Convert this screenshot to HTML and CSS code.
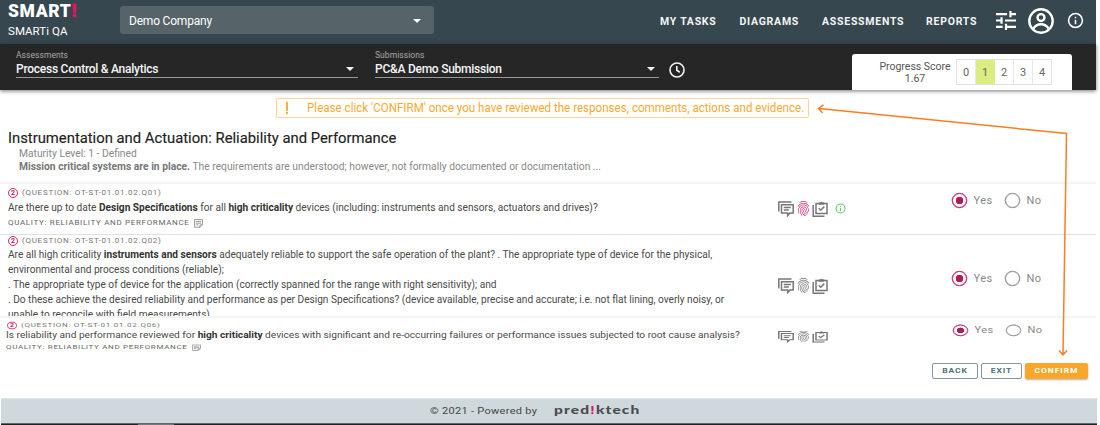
FILE: index.html
```html
<!DOCTYPE html>
<html lang="en">
<head>
<meta charset="utf-8">
<title>SMARTi QA</title>
<link rel="stylesheet" href="styles.css">
</head>
<body>
<svg class="defs" width="0" height="0">
  <symbol id="finger" viewBox="2 2 20 20" preserveAspectRatio="none"><path d="M17.81 4.47c-.08 0-.16-.02-.23-.06C15.66 3.42 14 3 12.01 3c-1.98 0-3.86.47-5.57 1.41-.24.13-.54.04-.68-.2-.13-.24-.04-.55.2-.68C7.82 2.52 9.86 2 12.01 2c2.13 0 3.99.47 6.03 1.52.25.13.34.43.21.67-.09.18-.26.28-.44.28zM3.5 9.72c-.1 0-.2-.03-.29-.09-.23-.16-.28-.47-.12-.7.99-1.4 2.25-2.5 3.75-3.27C9.98 4.04 14 4.03 17.15 5.65c1.5.77 2.76 1.86 3.75 3.25.16.22.11.54-.12.7-.23.16-.54.11-.7-.12-.9-1.26-2.04-2.25-3.39-2.94-2.87-1.47-6.54-1.47-9.4.01-1.36.7-2.5 1.7-3.4 2.96-.08.14-.23.21-.39.21zm6.25 12.07c-.13 0-.26-.05-.35-.15-.87-.87-1.34-1.43-2.01-2.64-.69-1.23-1.05-2.73-1.05-4.34 0-2.97 2.54-5.39 5.66-5.39s5.66 2.42 5.66 5.39c0 .28-.22.5-.5.5s-.5-.22-.5-.5c0-2.42-2.09-4.39-4.66-4.39-2.57 0-4.66 1.97-4.66 4.39 0 1.44.32 2.77.93 3.85.64 1.15 1.08 1.64 1.85 2.42.19.2.19.51 0 .71-.11.1-.24.15-.37.15zm7.17-1.85c-1.19 0-2.24-.3-3.1-.89-1.49-1.01-2.38-2.65-2.38-4.39 0-.28.22-.5.5-.5s.5.22.5.5c0 1.41.72 2.74 1.94 3.56.71.48 1.54.71 2.54.71.24 0 .64-.03 1.04-.1.27-.05.53.13.58.41.05.27-.13.53-.41.58-.57.11-1.07.12-1.21.12zM14.91 22c-.04 0-.09-.01-.13-.02-1.59-.44-2.63-1.03-3.72-2.1-1.4-1.39-2.17-3.24-2.17-5.22 0-1.62 1.38-2.94 3.08-2.94 1.7 0 3.08 1.32 3.08 2.94 0 1.07.93 1.94 2.08 1.94s2.08-.87 2.08-1.94c0-3.77-3.25-6.83-7.25-6.83-2.84 0-5.44 1.58-6.61 4.03-.39.81-.59 1.76-.59 2.8 0 .78.07 2.01.67 3.61.1.26-.03.55-.29.64-.26.1-.55-.04-.64-.29-.49-1.31-.73-2.61-.73-3.96 0-1.2.23-2.29.68-3.24 1.33-2.79 4.28-4.6 7.51-4.6 4.55 0 8.25 3.51 8.25 7.83 0 1.62-1.38 2.94-3.08 2.94s-3.08-1.32-3.08-2.94c0-1.07-.93-1.94-2.08-1.94s-2.08.87-2.08 1.94c0 1.71.66 3.31 1.87 4.51.95.94 1.86 1.46 3.27 1.85.27.07.42.35.35.61-.05.23-.26.38-.47.38z"/></symbol>
  <symbol id="comments" viewBox="0 0 16 16"><path fill="none" stroke="currentColor" stroke-width="1.5" d="M.8 10.500V1H13.500M3.500 3.700h11.700v8.300h-3.200l-2.300 2.600v-2.600H3.500zM5.800 6.600h7M5.800 9h5"/></symbol>
  <symbol id="clip" viewBox="0 0 16 16"><path fill="none" stroke="currentColor" stroke-width="1.500" d="M1.200 4v11.200H12.500M4 2.400h11v10H4zM6.700 7.200l2 2 3.600-3.600"/><path d="M6.700 1.600h1.500a1.400 1.400 0 0 1 2.600 0h1.500v2.200H6.700z"/></symbol>
  <symbol id="info" viewBox="1 1 22 22"><path d="M11 9h2V7h-2m1 13a8 8 0 1 1 0-16 8 8 0 0 1 0 16m0-18a10 10 0 1 0 0 20 10 10 0 0 0 0-20m-1 15h2v-6h-2z"/></symbol>
  <symbol id="note" viewBox="0 0 10 10"><path fill="none" stroke="currentColor" stroke-width=".9" d="M.6.6h8.800v5.800l-2.800 2.800h-6zM6.600 9.200V6.500h2.800M2 2.700h6M2 4.600h6M2 6.500h3"/></symbol>
</svg>
<div class="app">
  <header class="top">
    <div class="brand">
      <div class="logo">SMART<span class="bang">!</span></div>
      <div class="sub">SMARTi QA</div>
    </div>
    <div class="company"><span>Demo Company</span><i class="caret"></i></div>
    <nav class="nav">
      <span class="n1">MY TASKS</span><span class="n2">DIAGRAMS</span><span class="n3">ASSESSMENTS</span><span class="n4">REPORTS</span>
    </nav>
    <svg class="tune" viewBox="3 3 18 18" preserveAspectRatio="none"><path d="M3 17v2h6v-2H3M3 5v2h10V5H3m10 16v-2h8v-2h-8v-2h-2v6h2M7 9v2H3v2h4v2h2V9H7m14 4v-2H11v2h10m-6-4h2V7h4V5h-4V3h-2z"/></svg>
    <svg class="user" viewBox="0 0 24 24"><g fill="none" stroke="currentColor" stroke-width="2.200"><circle cx="12" cy="12" r="10.800"/><circle cx="12" cy="8.800" r="3.200"/><path d="M5 19c2-3.300 4.500-4 7-4s5 .700 7 4"/></g></svg>
    <svg class="about"><use href="#info"/></svg>
  </header>
  <section class="bar">
    <div class="field f1"><label>Assessments</label><div class="val"><span class="v1">Process Control &amp; Analytics</span><i class="caret"></i></div></div>
    <div class="field f2"><label>Submissions</label><div class="val"><span class="v2">PC&amp;A Demo Submission</span><i class="caret"></i></div></div>
    <svg class="clock" viewBox="0 0 16 16"><g fill="none" stroke="currentColor" stroke-width="1.600"><circle cx="8" cy="8" r="7"/><path d="M7.800 4v4.300l3 1.900"/></g></svg>
    <div class="score">
      <div class="label"><div>Progress Score</div><div>1.67</div></div>
      <div class="cells"><span>0</span><span class="on">1</span><span>2</span><span>3</span><span>4</span></div>
    </div>
  </section>
  <div class="alert"><span class="mark"></span><span class="msg">Please click 'CONFIRM' once you have reviewed the responses, comments, actions and evidence.</span></div>
  <section class="intro">
    <h1>Instrumentation and Actuation: Reliability and Performance</h1>
    <p class="level">Maturity Level: 1 - Defined</p>
    <p class="mission"><b>Mission critical systems are in place.</b> <span>The requirements are understood; however, not formally documented or documentation ...</span></p>
  </section>
  <section class="row r1">
    <div class="text">
      <div class="code"><span class="two">2</span><span>(QUESTION: OT-ST-01.01.02.Q01)</span></div>
      <div class="q">Are there up to date <b>Design Specifications</b> for all <b>high criticality</b> devices (including: instruments and sensors, actuators and drives)?</div>
      <div class="quality">QUALITY: RELIABILITY AND PERFORMANCE <svg><use href="#note"/></svg></div>
    </div>
    <div class="icons"><svg class="ic"><use href="#comments"/></svg><svg class="ic fp pink"><use href="#finger"/></svg><svg class="ic"><use href="#clip"/></svg><svg class="ok"><use href="#info"/></svg></div>
    <div class="radios"><i class="radio on"></i><span class="yes">Yes</span><i class="radio"></i><span>No</span></div>
  </section>
  <section class="row r2">
    <div class="text">
      <div class="code"><span class="two">2</span><span>(QUESTION: OT-ST-01.01.02.Q02)</span></div>
      <div class="q l1">Are all high criticality <b>instruments and sensors</b> adequately reliable to support the safe operation of the plant? . The appropriate type of device for the physical,</div>
      <div class="q l2">environmental and process conditions (reliable);</div>
      <div class="q l3">. The appropriate type of device for the application (correctly spanned for the range with right sensitivity); and</div>
      <div class="q l4">. Do these achieve the desired reliability and performance as per Design Specifications? (device available, precise and accurate; i.e. not flat lining, overly noisy, or</div>
      <div class="q l5">unable to reconcile with field measurements)</div>
    </div>
    <div class="icons"><svg class="ic"><use href="#comments"/></svg><svg class="ic fp"><use href="#finger"/></svg><svg class="ic"><use href="#clip"/></svg></div>
    <div class="radios"><i class="radio on"></i><span class="yes">Yes</span><i class="radio"></i><span>No</span></div>
  </section>
  <section class="row r3">
    <div class="text">
      <div class="code"><span class="two">2</span><span>(QUESTION: OT-ST-01.01.02.Q06)</span></div>
      <div class="q">Is reliability and performance reviewed for <b>high criticality</b> devices with significant and re-occurring failures or performance issues subjected to root cause analysis?</div>
      <div class="quality">QUALITY: RELIABILITY AND PERFORMANCE <svg><use href="#note"/></svg></div>
    </div>
    <div class="icons"><svg class="ic"><use href="#comments"/></svg><svg class="ic fp"><use href="#finger"/></svg><svg class="ic"><use href="#clip"/></svg></div>
    <div class="radios"><i class="radio on"></i><span class="yes">Yes</span><i class="radio"></i><span>No</span></div>
  </section>
  <div class="actions"><button class="back"><span>BACK</span></button><button class="exit"><span>EXIT</span></button><button class="confirm"><span>CONFIRM</span></button></div>
  <footer><span class="copy">© 2021 - Powered by</span><span class="pk">pred<em>!</em>ktech</span></footer>
  <div class="edge"><i></i></div>
  <svg class="arrow" viewBox="0 0 1100 425"><path fill="none" stroke="#fb7d24" stroke-width="1.500" d="M819 108.500L1066.500 133.500L1063 354M823.500 104.800L818.500 108.500L822.500 112.800M1059 350.500L1063 354.800L1067 350.500"/></svg>
</div>
</body>
</html>
```
FILE: styles.css
```css
* { box-sizing: border-box; }
body { margin: 0; background: #fff; font-family: Roboto, "Liberation Sans", sans-serif; color: #444; }
.defs { position: absolute; }
svg { fill: currentColor; display: block; flex: none; }
b { font-weight: 700; }
.app { position: relative; width: 1100px; height: 425px; overflow: hidden; display: flex; flex-direction: column; white-space: nowrap; }
.app > * { flex: none; }

.top { width: 1096px; height: 44px; background: #37474f; color: #fff; display: flex; align-items: flex-start; padding-left: 8px; }
.brand { width: 112px; }
.logo { font-size: 17.500px; line-height: 20px; padding-top: 1px; font-weight: 900; letter-spacing: .6px; }
.bang { color: #e5125d; -webkit-text-stroke: .6px #e5125d; }
.sub { font-size: 11.500px; line-height: 14px; margin-top: 3px; letter-spacing: .05px; }
.company { width: 314px; height: 28px; margin-top: 6px; padding: 2px 13px 0 9px; border-radius: 3px; background: #566469; display: flex; align-items: center; justify-content: space-between; font-size: 12px; letter-spacing: -.2px; line-height: 28px; }
.caret { border: 4px solid transparent; border-top-color: currentColor; border-bottom: 0; }
.nav { width: 562px; padding-left: 226px; display: flex; line-height: 43px; font-size: 10.500px; font-weight: 700; letter-spacing: .75px; color: #f3f5f5; }
.n1 { width: 79.500px; } .n2 { width: 82.500px; } .n3 { width: 104px; }
.tune { width: 20px; height: 19px; margin-top: 11px; }
.user { width: 26px; height: 26px; margin: 8px 0 0 12px; }
.about { width: 17px; height: 17px; margin: 12px 0 0 13px; }

.bar { width: 1096px; height: 46px; background: #262626; color: #f5f5f5; display: flex; padding-left: 16px; box-shadow: 0 1px 4px rgba(0,0,0,.55); }
.field { height: 34px; border-bottom: 1px solid #999; padding-top: 6px; }
.field label { display: block; font-size: 8.500px; line-height: 11px; color: #aaa; letter-spacing: .05px; }
.f1 { width: 342px; }
.f2 { width: 284px; margin-left: 17px; }
.val { display: flex; justify-content: space-between; align-items: center; font-size: 12px; line-height: 16px; font-weight: 500; padding-right: 4px; letter-spacing: -.25px; }
.v2 { letter-spacing: -.25px; }
.clock { width: 16px; height: 16px; margin: 18px 0 0 10px; }
.score { width: 220px; height: 36px; margin: 10px 0 0 167px; background: #fff; border-radius: 3px 3px 0 0; color: #555; display: flex; padding: 5px 0 0 27px; }
.label { width: 77px; text-align: center; font-size: 10.500px; line-height: 12px; padding-top: 2px; }
.label div { width: 72px; }
.cells { display: flex; height: 26px; border: 1px solid #e2e2e2; font-size: 11px; line-height: 25px; text-align: center; }
.cells span { width: 19px; border-right: 1px solid #e8e8e8; color: #666; }
.cells span:last-child { border: 0; width: 18px; }
.cells .on { background: #dbed80; border-color: #dbed80; }

.alert { width: 533px; height: 20px; margin: 8px 0 0 276px; border: 1px solid #ffd592; border-radius: 2px; display: flex; align-items: center; color: #fba92f; font-size: 12px; }
.mark { flex: none; width: 1.500px; height: 12px; margin: 0 19px 0 9px; background: linear-gradient(#fbae3a 0 75%, #fff 75% 85%, #fbae3a 85%); }
.msg { transform: scaleX(.966); transform-origin: 0 0; }

.intro { height: 66px; padding: 12px 0 0 8px; width: 1096px; border-bottom: 2px solid #f4f4f4; color: #888; }
h1 { margin: 0; font-size: 15px; line-height: 17px; font-weight: 400; color: #222; -webkit-text-stroke: .15px #222; transform: scaleX(.987); transform-origin: 0 0; }
.intro p { margin: 0 0 0 11px; font-size: 11px; line-height: 13px; transform: scaleX(.935); transform-origin: 0 0; }
.mission b { color: #777; }

.row { width: 1096px; display: flex; border-bottom: 1px solid #e0e0e0; padding-left: 8px; }
.text { width: 770px; }
.code { display: flex; align-items: center; gap: 4px; font-size: 8px; line-height: 10px; height: 10px; letter-spacing: .73px; color: #777; }
.two { width: 10px; height: 10px; border: 1px solid #d3246c; border-radius: 50%; color: #c2185b; font-size: 7px; font-weight: 700; line-height: 8px; text-align: center; letter-spacing: 0; }
.q { font-size: 11px; line-height: 15px; color: #4a4a4a; transform: scaleX(.92); transform-origin: 0 0; }
.q b { color: #333; }
.quality { display: flex; align-items: center; gap: 4px; font-size: 8px; line-height: 10px; letter-spacing: .67px; color: #666; }
.quality svg { width: 9px; height: 9px; color: #888; }
.icons { display: flex; width: 173.500px; color: #777; gap: 2px; align-items: flex-start; }
.ic { width: 16px; height: 16px; }
.fp { width: 13px; height: 15px; margin: 0 .5px; }
.fp.pink { color: #c73675; }
.ok { width: 11px; height: 11px; margin: 2px 0 0 5px; color: #5bc568; }
.radios { display: flex; align-items: center; height: 16px; font-size: 11px; letter-spacing: .4px; color: #888; }
.radio { width: 15px; height: 15px; border: 1.500px solid #888; border-radius: 50%; box-shadow: 0 0 0 .3px #888; }
.radio.on { border-color: #b5175b; box-shadow: 0 0 0 .3px #b5175b; background: radial-gradient(circle, #b5175b 0 3.500px, transparent 4px); }
.radios span { padding-left: 7px; }
.radios .yes { width: 38px; }

.r1 { height: 51px; padding-top: 4px; }
.r1 .q { padding-top: 2px; height: 20px; }
.r1 .icons { padding-top: 13px; } .r1 .radios { margin-top: 4px; }
.r2 { height: 83px; padding-top: 1px; border-bottom: 2px solid #f4f4f4; overflow: hidden; }
.r2 .code { margin-bottom: 1px; }
.r2 .icons { padding-top: 42px; } .r2 .radios { margin-top: 34px; }
.r3 { height: 53px; padding: 3px 0 0 6px; border: 0; transform: scaleY(.75); transform-origin: 0 0; }
.r3 .text { width: 772px; }
.r3 .code { margin: 2px 0 0 1px; }
.r3 .q { transform: scaleX(.924); padding-top: 1px; height: 19px; }
.r3 .icons { padding-top: 14px; } .r3 .radios { margin: 5px 0 0 1px; }

.actions { display: flex; justify-content: flex-end; gap: 3px; width: 1088px; margin-top: -8px; }
.actions button { height: 16px; border: 1px solid #8496a0; border-radius: 2px; background: #fff; color: #546e7a; font: 700 8.500px Roboto, sans-serif; letter-spacing: .9px; padding: 0; }
.actions span { display: block; transform: scaleY(.78); line-height: 14px; }
.actions .back { width: 46px; } .actions .exit { width: 41px; }
.actions .confirm { width: 63px; background: #f9a62b; border-color: #f9a62b; color: #fff; box-shadow: 0 1px 2px rgba(0,0,0,.3); }
footer { width: 1096px; height: 25px; margin: 19px 0 0 1px; background: #cfd8dd; border-top: 1px solid #dfe5e8; display: flex; align-items: center; padding-left: 429px; color: #444; }
.copy { font-size: 11px; width: 124px; transform: scaleY(.82); letter-spacing: .3px; }
.pk { font: 900 15.500px Lato, sans-serif; transform: scaleY(.75); letter-spacing: 1.150px; margin-top: -4px; color: #4b4b4f; }
.pk em { font-style: normal; color: #e5125d; }
.edge { width: 1096px; margin-left: 1px; height: 3px; background: #222; border-top: 1px solid #666; }
.edge i { display: block; width: 36px; height: 2px; margin-left: 137px; background: #777; }
.arrow { position: absolute; left: 0; top: 0; width: 1100px; height: 425px; }
```
